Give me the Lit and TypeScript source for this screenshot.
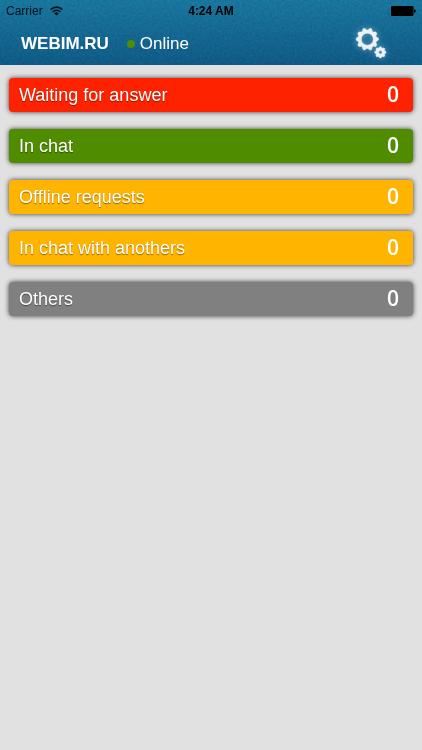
import { LitElement, html, css, svg } from "lit";
import { customElement, property } from "lit/decorators.js";

const gear = (
  cx: number,
  cy: number,
  outer: number,
  inner: number,
  hole: number,
  teeth: number,
  turn: number
) => {
  const step = (Math.PI * 2) / teeth;
  const at = (r: number, a: number) =>
    `${(cx + r * Math.sin(a)).toFixed(2)} ${(cy - r * Math.cos(a)).toFixed(2)}`;
  const points: string[] = [];
  for (let i = 0; i < teeth; i++) {
    const a = (i + turn) * step;
    points.push(
      at(inner, a - step * 0.38),
      at(outer, a - step * 0.13),
      at(outer, a + step * 0.13),
      at(inner, a + step * 0.38)
    );
  }
  const ring =
    `M${cx - hole} ${cy}a${hole} ${hole} 0 1 0 ${hole * 2} 0` +
    `a${hole} ${hole} 0 1 0 ${-hole * 2} 0Z`;
  return svg`<path fill-rule="evenodd" stroke-linejoin="round" d="M${points.join("L")}Z${ring}"></path>`;
};

@customElement("status-bar")
export class StatusBar extends LitElement {
  static styles = css`
    :host {
      display: grid;
      grid-template-columns: 1fr auto 1fr;
      align-items: center;
      height: 22px;
      padding: 0 6px;
      color: #03111a;
      font-size: 12px;
      line-height: 22px;
    }
    .carrier {
      display: flex;
      align-items: center;
      gap: 7px;
    }
    .time {
      font-weight: bold;
      color: #000;
    }
    .battery {
      justify-self: end;
    }
    svg {
      display: block;
    }
  `;

  render() {
    return html`
      <div class="carrier">
        <span>Carrier</span>
        <svg width="13" height="10" viewBox="0 0 13 10" fill="none" stroke="#03111a" stroke-width="1.7" aria-hidden="true">
          <path d="M0.7 3.5A8.2 8.2 0 0 1 12.3 3.5"></path>
          <path d="M2.8 5.8A5.2 5.2 0 0 1 10.2 5.8"></path>
          <path d="M6.5 9.6L4.3 7.4A3.1 3.1 0 0 1 8.7 7.4Z" fill="#03111a" stroke="none"></path>
        </svg>
      </div>
      <span class="time">4:24 AM</span>
      <svg class="battery" width="25" height="10" viewBox="0 0 25 10" aria-hidden="true">
        <rect width="22.5" height="10" rx="1" fill="#000"></rect>
        <path d="M23 3.2a1.8 1.8 0 0 1 0 3.6Z" fill="#000"></path>
      </svg>
    `;
  }
}

@customElement("queue-row")
export class QueueRow extends LitElement {
  @property() label = "";
  @property({ type: Number }) count = 0;
  @property({ reflect: true }) tone = "gray";

  static styles = css`
    :host {
      display: block;
      font-size: 18px;
    }
    .row {
      display: flex;
      align-items: center;
      justify-content: space-between;
      width: 100%;
      height: 34px;
      padding: 0 14px 0 10px;
      border: 0;
      border-radius: 4px;
      color: #fff;
      background: #808080;
      box-shadow: 0 0 5px rgba(0, 0, 0, 0.75);
      font: inherit;
      text-align: left;
      text-shadow: 0 1px 1px rgba(0, 0, 0, 0.45);
    }
    :host([tone="red"]) .row {
      background: #ff2200;
    }
    :host([tone="green"]) .row {
      background: #508c00;
    }
    :host([tone="amber"]) .row {
      background: #ffb400;
    }
    .count {
      padding-bottom: 2px;
      font: 600 21px/32px "Open Sans", "Noto Sans", sans-serif;
      text-shadow: none;
    }
  `;

  render() {
    return html`
      <button class="row" type="button">
        <span>${this.label}</span>
        <span class="count">${this.count}</span>
      </button>
    `;
  }
}

@customElement("app-root")
export class AppRoot extends LitElement {
  private queues = [
    { label: "Waiting for answer", count: 0, tone: "red" },
    { label: "In chat", count: 0, tone: "green" },
    { label: "Offline requests", count: 0, tone: "amber" },
    { label: "In chat with anothers", count: 0, tone: "amber" },
    { label: "Others", count: 0, tone: "gray" },
  ];

  static styles = css`
    :host {
      display: block;
      min-height: 100vh;
      background: #e1e1e1;
      font: 17px/22px "Liberation Sans", Arial, sans-serif;
    }
    .top {
      position: relative;
      background: linear-gradient(#19759d, #0f5a85);
      border-bottom: 1px solid #d3e6ee;
    }
    .grain {
      position: absolute;
      inset: 0;
      width: 100%;
      height: 100%;
      opacity: 0.08;
      mix-blend-mode: overlay;
    }
    status-bar,
    .bar {
      position: relative;
    }
    .bar {
      display: flex;
      align-items: center;
      height: 43px;
      padding: 0 35px 0 21px;
      color: #fff;
    }
    h1 {
      margin: 0 18px 0 0;
      font-size: 17px;
      line-height: 22px;
    }
    .state {
      display: flex;
      align-items: center;
      gap: 5px;
      flex: 1;
    }
    .dot {
      width: 8px;
      height: 8px;
      border-radius: 50%;
      background: #508c00;
    }
    .settings {
      padding: 0;
      border: 0;
      background: none;
      color: #eef0f2;
    }
    .settings svg {
      display: block;
      overflow: visible;
      filter: drop-shadow(0 0 3px rgba(200, 235, 255, 0.45));
    }
    .queues {
      display: flex;
      flex-direction: column;
      gap: 17px;
      padding: 12px 9px;
    }
  `;

  render() {
    return html`
      <header class="top">
        <svg class="grain" aria-hidden="true">
          <filter id="grain" x="0" y="0" width="100%" height="100%" color-interpolation-filters="sRGB">
            <feTurbulence type="fractalNoise" baseFrequency="0.4" numOctaves="2"></feTurbulence>
            <feColorMatrix
              type="matrix"
              values="1.5 0 0 0 -0.25  1.5 0 0 0 -0.25  1.5 0 0 0 -0.25  0 0 0 0 1"
            ></feColorMatrix>
          </filter>
          <rect width="100%" height="100%" filter="url(#grain)"></rect>
        </svg>
        <status-bar></status-bar>
        <div class="bar">
          <h1>WEBIM.RU</h1>
          <div class="state"><span class="dot"></span><span>Online</span></div>
          <button class="settings" type="button" aria-label="Settings">
            <svg width="31" height="32" viewBox="0 0 31 32" fill="currentColor" stroke="currentColor" stroke-width="0.5" aria-hidden="true">
              ${gear(11.3, 11.2, 11.2, 9.3, 6, 10, 0.5)} ${gear(24.4, 24.3, 5.7, 4.7, 1.8, 8, 0)}
            </svg>
          </button>
        </div>
      </header>
      <main class="queues">
        ${this.queues.map(
          (q) => html`<queue-row .label=${q.label} .count=${q.count} .tone=${q.tone}></queue-row>`
        )}
      </main>
    `;
  }
}
